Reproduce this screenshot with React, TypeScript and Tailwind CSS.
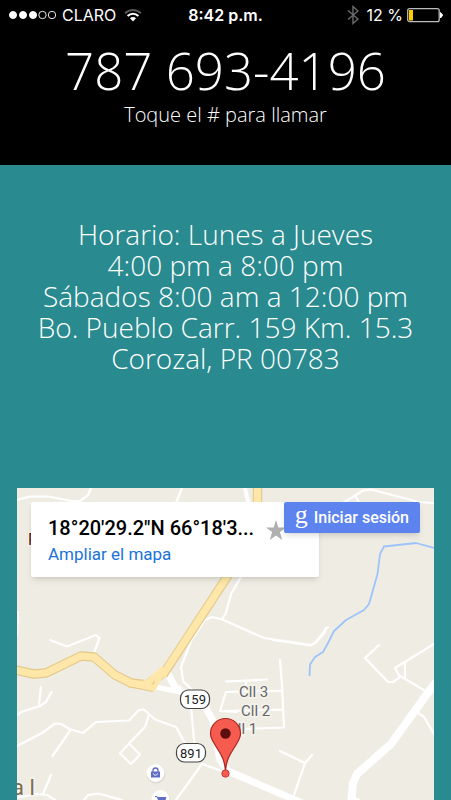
function StatusBar() {
  return (
    <div className="grid grid-cols-[1fr_auto_1fr] items-center h-[30px] px-2 text-base font-normal font-['Inter',sans-serif]">
      <div className="flex items-center">
        <svg className="w-12 h-3 mr-1.5" viewBox="0 0 48 12" fill="none" stroke="white">
          <circle cx="5" cy="6" r="3.500" fill="white" />
          <circle cx="15" cy="6" r="3.500" fill="white" />
          <circle cx="25" cy="6" r="3.500" fill="white" />
          <circle cx="34.500" cy="6" r="3.700" strokeWidth="0.900" />
          <circle cx="44" cy="6" r="3.700" strokeWidth="0.900" />
        </svg>
        <span>CLARO</span>
        <svg className="w-[18px] h-[14px] ml-2" viewBox="0 0 18 14" fill="none" strokeWidth="2">
          <path d="M1 5.200C5.500 0.900 12.500 0.900 17 5.200" stroke="#555" />
          <path d="M3.600 8C6.700 5 11.300 5 14.400 8" stroke="white" />
          <path d="M6 10.300C7.700 8.700 10.300 8.700 12 10.300L9 13.500Z" fill="white" />
        </svg>
      </div>

      <span className="font-semibold">8:42 p.m.</span>

      <div className="flex items-center justify-end">
        <svg className="w-3 h-5 mr-2" viewBox="0 0 12 20" fill="none" stroke="#6b6b6b" strokeWidth="1.400">
          <path d="M1 5.500L11 14L6 18.500V1.500L11 6L1 14.500" />
        </svg>
        <span>12 %</span>
        <svg className="w-9 h-4 ml-1" viewBox="0 0 36 16">
          <rect x="0.700" y="1.700" width="31.500" height="13" rx="2" fill="none" stroke="#bdbdbd" strokeWidth="1.300" />
          <rect x="2" y="3" width="4" height="10.500" fill="#fc0" />
          <path d="M33.500 5.500L35.700 8.200L33.500 11Z" fill="white" stroke="white" strokeLinejoin="round" />
        </svg>
      </div>
    </div>
  )
}

function RoadMap() {
  return (
    <svg
      className="absolute inset-0 w-full h-full"
      viewBox="17 488 417 312"
      preserveAspectRatio="xMidYMin slice"
      aria-hidden="true"
    >
      <rect x="17" y="488" width="417" height="312" fill="#efece4" />

      {/* Quebrada */}
      <path
        d="M434 548L416 543L384 546.500L380 554L377.500 574L369 604L364 610L346 620L334 631L328 643L323 652L315 657L310 664.500L309.500 676"
        fill="none"
        stroke="#9cc4fb"
        strokeWidth="1.800"
        strokeLinejoin="round"
      />

      {/* Calles */}
      <g fill="none" stroke="white" strokeWidth="2.200" strokeLinejoin="round" strokeLinecap="round">
        <path d="M17 500L30 496.500L48 496.500L72 501L80 501L88 495L91 488" />
        <path d="M182 488L176 503" />
        <path d="M245 488L250 510" strokeWidth="4" />
        <path d="M343 503L356 495L363 490.500L371 489.500L419 502L434 503" />
        <path d="M355 495L359 503" />
        <path d="M241 577L231 594L226 613L222 619" />
        <path d="M326 628L324 633L317 640M326 628L328 627.500" />
        <path d="M197 695L183 681L181 667L191 641L205 620L212 617L221 619L264 638L312 645L318 640L325 632" />
        <path d="M17 635L18 612" />
        <path d="M50 640L67 646.500L96 635L99.500 638L94 653" />
        <path d="M17 715L22 711.500L40 706L46 702L51.500 692" />
        <path d="M39 704L41 687" />
        <path d="M17 746L42 733L55 723.500L61 724L69.500 729L83 733L96 722L129 720.500L139 710L144 709.500L155 719.500L176 727L186 745L192 757" />
        <path d="M70.500 730L52.500 756" />
        <path d="M149 715L145 727L129 743.500M129 743.500L120 753.500L131 764L140 754.500Z" />
        <path d="M191 707L195 750M202 764L176 800M202 764L222 771" />
        <path d="M51 775L43 794M17 798L35 794L47 795L55 800" />
        <path d="M84 800L88 795L98 793.500L122 800" />
        <path d="M226 681.500L267 679.500M246 681L246 688M226 692L282 690.500M224 711L283 709.500M240 729L284 727.500L282 685L280 660M226 692L220 711L237 712" />
        <path d="M273 640L310 645.500L316 642.500L326 629" />
        <path d="M280 751L305 763L312 755M305 763L294 795" />
        <path d="M379 645L365 658L388 682L393 682L400 677L395 668L434 644M400 676L424 690M405 662V678M417 712L424 717L434 734" />
        <path d="M352 797L368 804" />
      </g>

      {/* Carretera 159 */}
      <g fill="none" stroke="white" strokeLinejoin="round">
        <path d="M166 670L175 687L190 697L205 706L213 721L216 740L220 760L228 771L302 803" strokeWidth="7" />
        <path d="M156 687L184 693" strokeWidth="5" />
        <path d="M436 682L427 694L391 744L357 774L353 783L351 803" strokeWidth="8" />
      </g>
      <g fill="none" strokeLinejoin="round">
        <g stroke="#e4c98b" strokeWidth="9.500">
          <path d="M257.500 485V507L227 577L163 675" />
          <path d="M15 670L34 674L46 673L81 656L94 657L115 675L131 683L147 685L163 673" />
        </g>
        <path d="M162 666L166 671L155 691L153 691.500L128 686L148 679Z" fill="#fee7a8" />
        <path d="M128 686.500L153 691.500" stroke="#e4c98b" strokeWidth="1.200" />
        <g stroke="#fee7a8" strokeWidth="7.200">
          <path d="M257.500 485V507L227 577L162 676" />
          <path d="M15 670L34 674L46 673L81 656L94 657L115 675L131 683L147 685L163 673" />
        </g>
        <path d="M151 685L155 680L154 684Z" fill="#e4c98b" />
      </g>

      <g fontFamily="Roboto, sans-serif" stroke="#f5f3ee" strokeWidth="3" paintOrder="stroke">
        <text x="28" y="545" fontSize="16" fill="#4d1712">P</text>
        <text x="239" y="697" fontSize="15" fill="#666">Cll 3</text>
        <text x="241" y="716" fontSize="15" fill="#666">Cll 2</text>
        <text x="228" y="734" fontSize="15" fill="#666">Cll 1</text>
        <text x="12" y="795" fontSize="22" fill="#7d6c4e">a l</text>
      </g>

      {/* Números de carretera */}
      <g fontFamily="Roboto, sans-serif" fontSize="13" textAnchor="middle">
        <rect x="180.500" y="690" width="29" height="18.500" rx="8" fill="white" stroke="#444" strokeWidth="1.200" />
        <text x="195" y="704" fill="#222">159</text>
        <rect x="176.500" y="743.500" width="29" height="18.500" rx="8" fill="white" stroke="#444" strokeWidth="1.200" />
        <text x="191" y="757.500" fill="#222">891</text>
      </g>

      {/* Tiendas */}
      <circle cx="156" cy="774" r="9.500" fill="#dcd9d2" />
      <circle cx="155.500" cy="773" r="9" fill="white" />
      <path d="M153 772V770.500A2.500 2.500 0 0 1 158 770.500V772" fill="none" stroke="#616cc5" strokeWidth="1.300" />
      <path d="M151 771.500H160V777.500H151Z" fill="#616cc5" />
      <path d="M153.500 773.500C154 775.800 157 775.800 157.500 773.500" fill="none" stroke="white" />
      <circle cx="161" cy="800" r="9.500" fill="#dcd9d2" />
      <circle cx="160.500" cy="799" r="9" fill="white" />
      <path d="M155 796.500H157L159 801H164.500L166 797.500H157.500" fill="#616cc5" stroke="#616cc5" />

      {/* Marcador */}
      <path
        d="M225.500 771C224.500 757 219 752 214.500 744C212 740 210.500 737 210.500 733.500A15 15 0 0 1 240.500 733.500C240.500 737 239 740 236.500 744C232 752 226.500 757 225.500 771Z"
        fill="#f65b50"
        stroke="#a9261f"
        strokeWidth="1.200"
      />
      <circle cx="225.500" cy="733.500" r="5.200" fill="#5c0f0d" />
      <circle cx="225.500" cy="773.500" r="3.700" fill="#f65b50" stroke="#b52b24" strokeWidth="0.800" />
    </svg>
  )
}

export default function App() {
  return (
    <main className="min-h-screen flex flex-col bg-[#298a8f] text-white font-['Open_Sans',sans-serif] font-light text-center">

      <header className="bg-black">
        <StatusBar />

        {/* Teléfono */}
        <div className="pt-[10px] pb-9">
          <a href="tel:7876934196" className="block text-[51px] leading-[61px]">787 693-4196</a>
          <p className="text-xl leading-7">Toque el # para llamar</p>
        </div>
      </header>

      {/* Horario */}
      <section className="pt-[54px] pb-[114px] text-[28px] leading-[31px]">
        <p>Horario: Lunes a Jueves</p>
        <p>4:00 pm a 8:00 pm</p>
        <p>Sábados 8:00 am a 12:00 pm</p>
        <p>Bo. Pueblo Carr. 159 Km. 15.3</p>
        <p>Corozal, PR 00783</p>
      </section>

      {/* Mapa */}
      <section className="relative flex-1 min-h-[312px] mx-[17px] overflow-hidden font-['Roboto',sans-serif] font-normal text-left">
        <RoadMap />

        <div className="absolute top-[14px] left-[14px] w-72 h-[75px] flex px-[17px] pt-3 bg-white rounded-xs shadow-md">
          <div>
            <h2 className="text-xl leading-7 font-medium text-black whitespace-nowrap">18°20'29.2"N 66°18'3...</h2>
            <a href="#mapa" className="block text-[17px] leading-6 text-[#1a73d9]">Ampliar el mapa</a>
          </div>
          <svg className="w-5 h-5 mt-1.5 ml-3 shrink-0" viewBox="0 0 20 20" fill="#b0b0b0">
            <path d="M10 0L12.400 7.400H20L13.900 12L16.200 20L10 15.400L3.800 20L6.100 12L0 7.400H7.600Z" />
          </svg>
        </div>

        <button className="absolute top-[14px] right-[14px] h-[31px] px-[11px] flex items-center gap-1.5 bg-[#5d83ef] rounded-xs shadow-md text-base font-medium">
          <span className="font-['Liberation_Serif',serif] font-normal text-[26px] leading-6 pb-1.5">g</span>
          Iniciar sesión
        </button>
      </section>

    </main>
  )
}
